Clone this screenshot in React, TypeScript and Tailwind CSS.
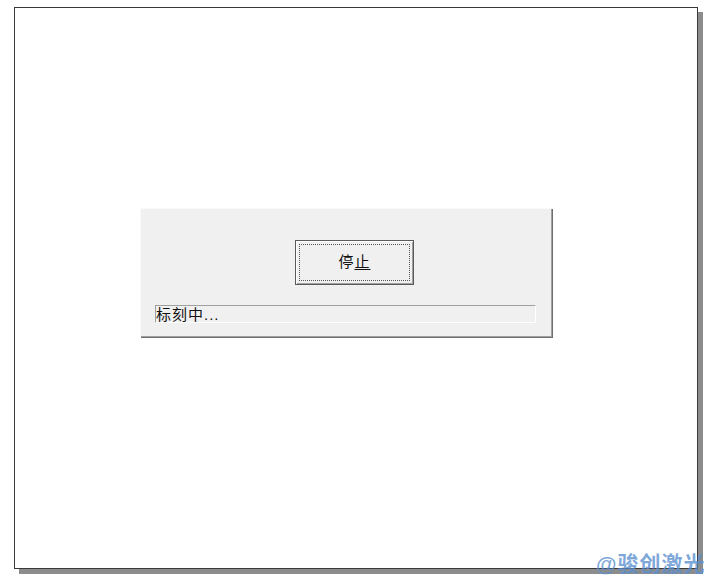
export default function App() {
  return (
    <div className="relative h-[579px] w-[714px] overflow-hidden bg-white font-['Liberation_Sans','Noto_Sans_CJK_SC',sans-serif]">
      {/* page frame */}
      <div className="ml-[14px] mt-[7px] h-[562px] w-[684px] border border-[#3a3a3a] bg-white pl-[125px] pt-[200px] shadow-[5px_5px_0_#8c8c8c]">
        {/* progress dialog */}
        <div className="h-[129px] w-[412px] border-t border-l border-[#fafafa] bg-[#f0f0f0] shadow-[inset_-1px_-1px_0_#a0a0a0,1px_1px_0_#6e6e6e]">
          <div className="pl-[154px] pt-[31px]">
            <button className="flex h-[45px] w-[119px] items-center justify-center border border-[#5a5a5a] bg-[#f0f0f0] p-[3px] shadow-[inset_1px_1px_0_#ffffff,inset_-1px_-1px_0_#a0a0a0]">
              <span className="flex h-full w-full items-center justify-center border border-dotted border-[#555] text-[15px] tracking-[1px] text-[#111]">
                停<span className="underline underline-offset-2">止</span>
              </span>
            </button>
          </div>
          <div className="ml-[14px] mt-[20px] flex h-[18px] w-[381px] items-center border-t border-l border-[#a0a0a0] border-r border-b border-r-white border-b-white bg-[#f0f0f0] text-[15px] leading-none tracking-[1px] text-[#111]">
            标刻中...
          </div>
        </div>
      </div>
      {/* watermark */}
      <div className="absolute left-[596px] top-[553px] text-[21px] font-bold leading-none tracking-[1px] text-[#5b8fd0]/80">
        @骏创激光
      </div>
    </div>
  );
}
